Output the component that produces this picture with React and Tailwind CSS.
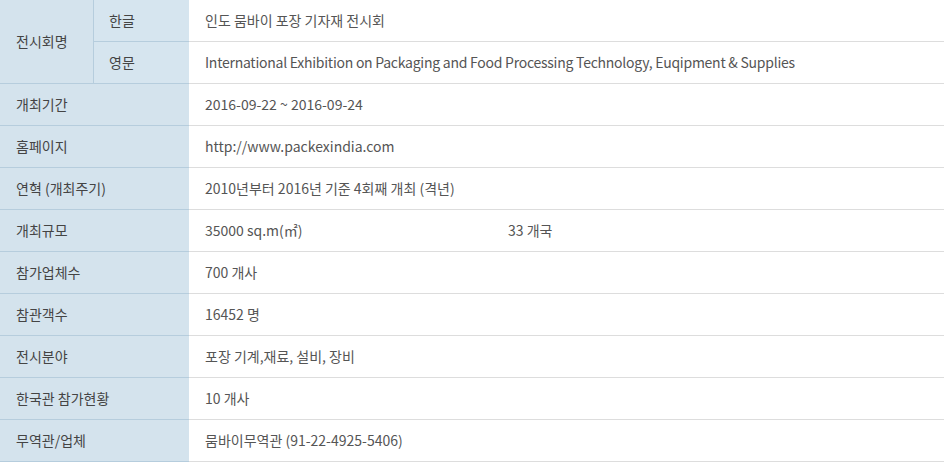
const rows = [
  { label: "개최기간", value: "2016-09-22 ~ 2016-09-24" },
  { label: "홈페이지", value: "http://www.packexindia.com" },
  { label: "연혁 (개최주기)", value: "2010년부터 2016년 기준 4회째 개최 (격년)" },
  { label: "개최규모", value: "35000 sq.m(㎡)", extra: "33 개국" },
  { label: "참가업체수", value: "700 개사" },
  { label: "참관객수", value: "16452 명" },
  { label: "전시분야", value: "포장 기계,재료, 설비, 장비" },
  { label: "한국관 참가현황", value: "10 개사" },
  { label: "무역관/업체", value: "뭄바이무역관 (91-22-4925-5406)" },
]

export default function App() {
  return (
    <div
      className="w-[944px] h-[462px] bg-white text-[14px] overflow-hidden"
      style={{ fontFamily: '"Noto Sans CJK KR", "Noto Sans", sans-serif' }}
    >
      <div className="grid grid-cols-[94px_95px_1fr]">
        {/* 전시회명 */}
        <div className="row-span-2 flex items-center pl-4 bg-[#d4e3ed] text-[#444] border-b border-r border-[#b6cddd]">
          전시회명
        </div>
        <div className="h-[42px] flex items-center pl-[15px] bg-[#d6e5ef] text-[#444] border-b border-[#b6cddd]">
          한글
        </div>
        <div className="h-[42px] flex items-center pl-4 text-[#555] border-b border-[#dddddd]">
          인도 뭄바이 포장 기자재 전시회
        </div>
        <div className="h-[42px] flex items-center pl-[15px] bg-[#d6e5ef] text-[#444] border-b border-[#b6cddd]">
          영문
        </div>
        <div className="h-[42px] flex items-center pl-4 text-[#555] tracking-[-0.25px] border-b border-[#dddddd]">
          International Exhibition on Packaging and Food Processing Technology, Euqipment &amp; Supplies
        </div>

        {rows.map((r) => (
          <div key={r.label} className="contents">
            <div className="col-span-2 h-[42px] flex items-center pl-4 bg-[#d4e3ed] text-[#444] border-b border-[#b6cddd]">
              {r.label}
            </div>
            <div className="h-[42px] flex items-center pl-4 text-[#555] border-b border-[#dddddd]">
              <span className="w-[303px]">{r.value}</span>
              {r.extra && <span>{r.extra}</span>}
            </div>
          </div>
        ))}
      </div>
    </div>
  )
}
